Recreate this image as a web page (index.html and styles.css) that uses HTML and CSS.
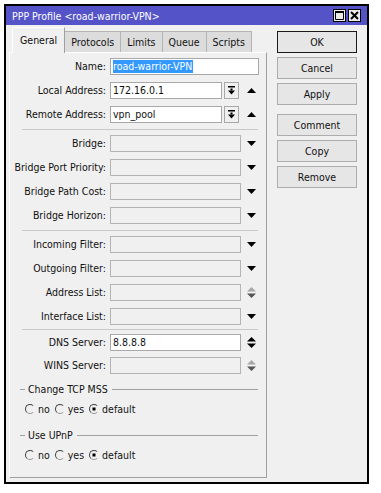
FILE: index.html
```html
<!DOCTYPE html>
<html lang="en">
    <head>
        <meta charset="UTF-8" />
        <title>PPP Profile</title>
        <link rel="stylesheet" href="styles.css">
    </head>
    <body>
        <div class="window">
            <div class="titlebar">
                <span class="title">PPP Profile &lt;road-warrior-VPN&gt;</span>
                <div class="title-btns">
                    <span class="tbtn">
                        <svg width="9" height="9" viewBox="0 0 9 9"><path d="M0.5 0.5H8.5V8.5H0.5Z M0.5 1.5H8.5" fill="none" stroke="#000" stroke-width="1"/><rect x="0" y="0" width="9" height="2" fill="#000"/></svg>
                    </span>
                    <span class="tbtn">
                        <svg width="9" height="9" viewBox="0 0 9 9"><path d="M1 1L8 8M8 1L1 8" stroke="#000" stroke-width="2"/></svg>
                    </span>
                </div>
            </div>
            <div class="client">
                <div class="main">
                    <div class="tabs">
                        <div class="tab active">General</div>
                        <div class="tab">Protocols</div>
                        <div class="tab">Limits</div>
                        <div class="tab">Queue</div>
                        <div class="tab">Scripts</div>
                    </div>
                    <div class="panel">
                        <div class="row">
                            <label>Name:</label>
                            <div class="field w-full"><span class="sel">road-warrior-VPN</span></div>
                        </div>
                        <div class="row">
                            <label>Local Address:</label>
                            <div class="field w-mid">172.16.0.1</div>
                            <span class="pick"><svg width="9" height="9" viewBox="0 0 9 9"><rect x="1" y="0" width="7" height="1.5"/><rect x="3.5" y="2.5" width="2" height="2"/><path d="M1 4.5H8L4.5 8.5Z"/></svg></span>
                            <span class="arr"><svg width="9" height="5" viewBox="0 0 9 5"><path d="M0 5H9L4.5 0Z"/></svg></span>
                        </div>
                        <div class="row">
                            <label>Remote Address:</label>
                            <div class="field w-mid">vpn_pool</div>
                            <span class="pick"><svg width="9" height="9" viewBox="0 0 9 9"><rect x="1" y="0" width="7" height="1.5"/><rect x="3.5" y="2.5" width="2" height="2"/><path d="M1 4.5H8L4.5 8.5Z"/></svg></span>
                            <span class="arr"><svg width="9" height="5" viewBox="0 0 9 5"><path d="M0 5H9L4.5 0Z"/></svg></span>
                        </div>

                        <div class="sep"></div>

                        <div class="row">
                            <label>Bridge:</label>
                            <div class="field empty"></div>
                            <span class="arr"><svg width="9" height="5" viewBox="0 0 9 5"><path d="M0 0H9L4.5 5Z"/></svg></span>
                        </div>
                        <div class="row">
                            <label>Bridge Port Priority:</label>
                            <div class="field empty"></div>
                            <span class="arr"><svg width="9" height="5" viewBox="0 0 9 5"><path d="M0 0H9L4.5 5Z"/></svg></span>
                        </div>
                        <div class="row">
                            <label>Bridge Path Cost:</label>
                            <div class="field empty"></div>
                            <span class="arr"><svg width="9" height="5" viewBox="0 0 9 5"><path d="M0 0H9L4.5 5Z"/></svg></span>
                        </div>
                        <div class="row">
                            <label>Bridge Horizon:</label>
                            <div class="field empty"></div>
                            <span class="arr"><svg width="9" height="5" viewBox="0 0 9 5"><path d="M0 0H9L4.5 5Z"/></svg></span>
                        </div>

                        <div class="sep"></div>

                        <div class="row">
                            <label>Incoming Filter:</label>
                            <div class="field empty"></div>
                            <span class="arr"><svg width="9" height="5" viewBox="0 0 9 5"><path d="M0 0H9L4.5 5Z"/></svg></span>
                        </div>
                        <div class="row">
                            <label>Outgoing Filter:</label>
                            <div class="field empty"></div>
                            <span class="arr"><svg width="9" height="5" viewBox="0 0 9 5"><path d="M0 0H9L4.5 5Z"/></svg></span>
                        </div>
                        <div class="row">
                            <label>Address List:</label>
                            <div class="field empty"></div>
                            <span class="arr"><svg width="9" height="11" viewBox="0 0 9 11"><path d="M0 4.5H9L4.5 0Z" fill="#a8a8a8"/><path d="M0 6.5H9L4.5 11Z" fill="#555"/></svg></span>
                        </div>
                        <div class="row">
                            <label>Interface List:</label>
                            <div class="field empty"></div>
                            <span class="arr"><svg width="9" height="5" viewBox="0 0 9 5"><path d="M0 0H9L4.5 5Z"/></svg></span>
                        </div>

                        <div class="sep tight"></div>

                        <div class="row short">
                            <label>DNS Server:</label>
                            <div class="field">8.8.8.8</div>
                            <span class="arr"><svg width="9" height="11" viewBox="0 0 9 11"><path d="M0 4.5H9L4.5 0Z"/><path d="M0 6.5H9L4.5 11Z"/></svg></span>
                        </div>
                        <div class="row short">
                            <label>WINS Server:</label>
                            <div class="field empty"></div>
                            <span class="arr"><svg width="9" height="11" viewBox="0 0 9 11"><path d="M0 4.5H9L4.5 0Z" fill="#a8a8a8"/><path d="M0 6.5H9L4.5 11Z" fill="#555"/></svg></span>
                        </div>

                        <div class="group-title">Change TCP MSS</div>
                        <div class="radios">
                            <span class="radio"></span><span class="rlabel">no</span>
                            <span class="radio"></span><span class="rlabel">yes</span>
                            <span class="radio on"></span><span class="rlabel">default</span>
                        </div>

                        <div class="group-title second">Use UPnP</div>
                        <div class="radios">
                            <span class="radio"></span><span class="rlabel">no</span>
                            <span class="radio"></span><span class="rlabel">yes</span>
                            <span class="radio on"></span><span class="rlabel">default</span>
                        </div>
                    </div>
                </div>
                <div class="buttons">
                    <div class="btn default">OK</div>
                    <div class="btn">Cancel</div>
                    <div class="btn">Apply</div>
                    <div class="btn spaced">Comment</div>
                    <div class="btn">Copy</div>
                    <div class="btn">Remove</div>
                </div>
            </div>
        </div>
    </body>
</html>
```

FILE: styles.css
```css
* {
    padding: 0;
    margin: 0;
    box-sizing: border-box;
}
body {
    background: #ffffff;
    font-family: 'DejaVu Sans Condensed', 'DejaVu Sans', sans-serif;
    font-stretch: condensed;
    font-size: 10.5px;
    color: #111;
}
.window {
    margin: 4px 0 0 4px;
    width: 365px;
    height: 480px;
    border: 2px solid #000;
    background: #f0f0f0;
}
.titlebar {
    height: 19px;
    background: #5454c8;
    color: #fff;
    display: flex;
    align-items: center;
    justify-content: space-between;
    padding: 0 6px 0 6px;
}
.title-btns {
    display: flex;
    gap: 2px;
}
.tbtn {
    width: 13px;
    height: 13px;
    background: #ececec;
    border: 1px solid #000;
    display: flex;
    align-items: center;
    justify-content: center;
}
.client {
    display: flex;
    padding-top: 2px;
}
.main {
    margin-left: 3px;
    width: 258px;
}
.tabs {
    display: flex;
    align-items: flex-end;
    height: 25px;
    padding-left: 3px;
}
.tab {
    height: 21px;
    line-height: 20px;
    padding: 0 6px;
    background: #dcdcdc;
    border: 1px solid #b4b4b4;
    border-bottom: none;
    margin-right: -1px;
}
.tab.active {
    height: 26px;
    line-height: 24px;
    margin-bottom: -1px;
    padding: 0 7px;
    background: #f0f0f0;
    border-color: #ffffff #a0a0a0 #f0f0f0 #ffffff;
    position: relative;
    z-index: 1;
}
.panel {
    height: 426px;
    border: 1px solid;
    border-color: #ffffff #a0a0a0 #a0a0a0 #ffffff;
    padding-top: 2px;
}
.row {
    display: flex;
    align-items: flex-start;
    height: 24px;
    padding-top: 3px;
}
.row.short {
    height: 23px;
}
.row label {
    width: 96px;
    text-align: right;
    line-height: 17px;
    margin-right: 4px;
}
.field {
    width: 131px;
    height: 17px;
    line-height: 15px;
    padding-left: 2px;
    background: #ffffff;
    border: 1px solid #a8a8a8;
    white-space: nowrap;
    overflow: hidden;
}
.field.empty {
    background: #f0f0f0;
    border-color: #b4b4b4;
}
.field.w-full {
    width: 149px;
}
.field.w-mid {
    width: 112px;
}
.sel {
    display: inline-block;
    background: #3399ff;
    color: #fff;
    line-height: 13px;
    padding: 0 1px 0 0;
}
.pick {
    width: 15px;
    height: 17px;
    margin-left: 2px;
    border: 1px solid #a8a8a8;
    background: #f0f0f0;
    display: flex;
    align-items: center;
    justify-content: center;
}
.pick + .arr {
    margin-left: 2px;
}
.arr {
    width: 20px;
    height: 17px;
    display: flex;
    align-items: center;
    justify-content: center;
}
.sep {
    height: 1px;
    background: #c8c8c8;
    margin: 2px 8px 2px 12px;
}
.sep.tight {
    margin: 0 8px 1px 12px;
}
.group-title {
    display: flex;
    align-items: center;
    height: 18px;
    margin: 3px 8px 0 10px;
}
.group-title.second {
    margin-top: 6px;
}
.group-title::before {
    content: '';
    width: 5px;
    border-top: 1px solid #a0a0a0;
    margin-right: 3px;
}
.group-title::after {
    content: '';
    flex: 1;
    border-top: 1px solid #a0a0a0;
    margin-left: 4px;
}
.radios {
    display: flex;
    align-items: center;
    height: 22px;
    padding-left: 15px;
}
.radio {
    width: 10px;
    height: 10px;
    border-radius: 50%;
    border: 1px solid;
    border-color: #404040 #f4f4f4 #909090 #404040;
    position: relative;
}
.radio.on::after {
    content: '';
    position: absolute;
    left: 3px;
    top: 3px;
    width: 2px;
    height: 2px;
    background: #000;
    box-shadow: 0 0 0 0.5px #000;
}
.rlabel {
    margin: 0 5px 0 3px;
}
.buttons {
    margin: 4px 0 0 10px;
    width: 80px;
    display: flex;
    flex-direction: column;
    gap: 4px;
}
.btn {
    height: 22px;
    line-height: 20px;
    text-align: center;
    background: #e6e6e6;
    border: 1px solid #adadad;
}
.btn.default {
    border-color: #1a1a1a;
}
.btn.spaced {
    margin-top: 5px;
}
```
